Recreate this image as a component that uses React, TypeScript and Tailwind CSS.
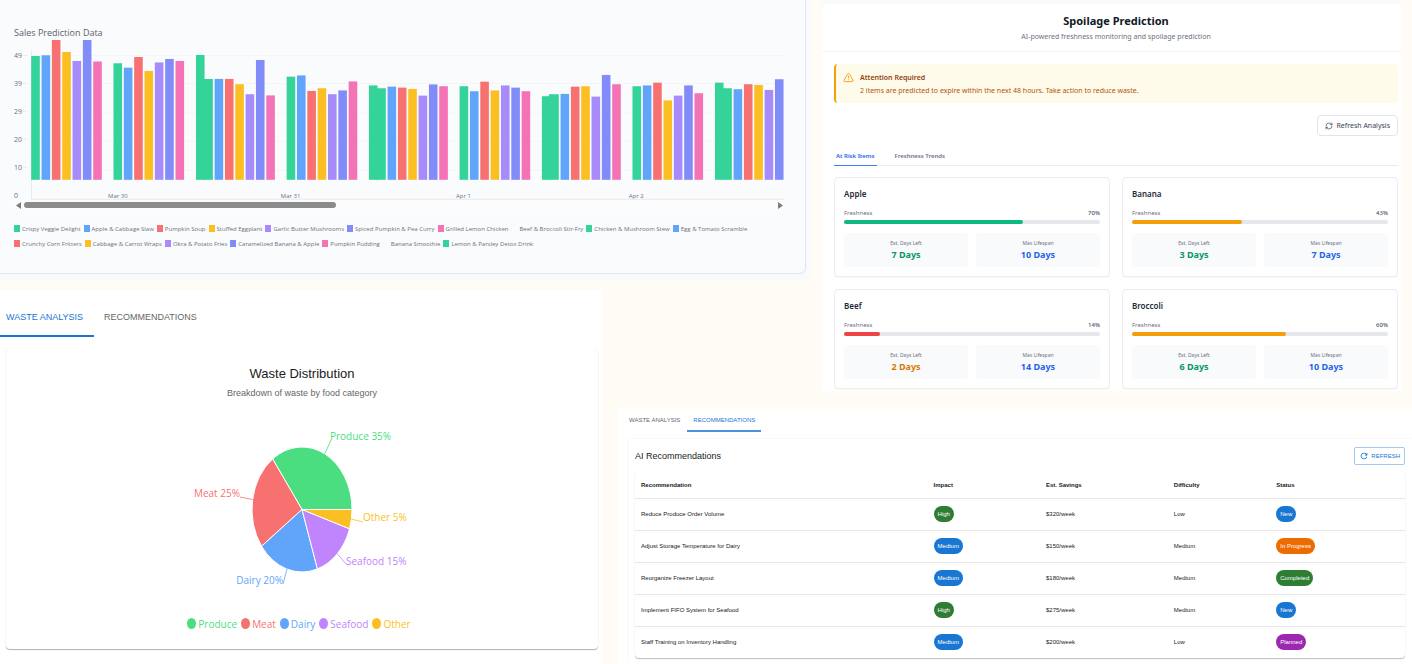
import { RefreshCw, TriangleAlert } from "lucide-react";
import { MdRefresh } from "react-icons/md";

const GREEN = "#34d399";
const BLUE = "#60a5fa";
const RED = "#f87171";
const AMBER = "#fbbf24";
const VIOLET = "#a78bfa";
const INDIGO = "#818cf8";
const PINK = "#f472b6";

const BAR_COLORS = [GREEN, BLUE, RED, AMBER, VIOLET, INDIGO, PINK];

const BASELINE = 180;
const BAR_WIDTH = 8.6;

/* Each group lists the top of its bars; `extra` is a second green bar that touches the first. */
const BAR_GROUPS: { x: number; extra?: number; tops: number[] }[] = [
  { x: 31.2, tops: [56, 55.3, 40, 52, 61, 40, 61.5] },
  { x: 113.6, tops: [63.3, 67.7, 57, 71, 62.5, 59, 61] },
  { x: 196.2, extra: 79, tops: [55, 79, 79, 84.3, 94.3, 60, 95.5] },
  { x: 287, tops: [76.7, 75.5, 91, 88.3, 94.3, 90.5, 81.5] },
  { x: 369.4, extra: 88.3, tops: [85.5, 86.7, 87.7, 89, 95.7, 84.5, 86.3] },
  { x: 460.2, tops: [86.3, 91.3, 81.7, 90.5, 85.5, 87.7, 91.3] },
  { x: 542.6, extra: 94.3, tops: [96.3, 94, 86.7, 86.3, 96.7, 75, 84.3] },
  { x: 633.3, tops: [86.3, 85.5, 82.7, 100.5, 95.7, 85.5, 93.3] },
  { x: 715.9, extra: 88.3, tops: [82.7, 89.3, 84.3, 85, 90, 79.3] },
];

const Y_LABELS = [
  { text: "49", y: 56 },
  { text: "39", y: 84 },
  { text: "29", y: 112 },
  { text: "20", y: 140 },
  { text: "10", y: 168 },
  { text: "0", y: 196 },
];

const X_LABELS = [
  { text: "Mar 30", x: 118 },
  { text: "Mar 31", x: 291 },
  { text: "Apr 1", x: 464 },
  { text: "Apr 2", x: 637 },
];

const DISHES: [string, string][] = [
  ["Crispy Veggie Delight", GREEN],
  ["Apple & Cabbage Slaw", BLUE],
  ["Pumpkin Soup", RED],
  ["Stuffed Eggplant", AMBER],
  ["Garlic Butter Mushrooms", VIOLET],
  ["Spiced Pumpkin & Pea Curry", INDIGO],
  ["Grilled Lemon Chicken", PINK],
  ["Beef & Broccoli Stir-Fry", "transparent"],
  ["Chicken & Mushroom Stew", GREEN],
  ["Egg & Tomato Scramble", BLUE],
  ["Crunchy Corn Fritters", RED],
  ["Cabbage & Carrot Wraps", AMBER],
  ["Okra & Potato Fries", VIOLET],
  ["Caramelized Banana & Apple", INDIGO],
  ["Pumpkin Pudding", PINK],
  ["Banana Smoothie", "transparent"],
  ["Lemon & Parsley Detox Drink", GREEN],
];

function SalesChart() {
  return (
    <svg viewBox="14 39 772 161" className="block w-full" role="img" aria-label="Sales prediction by dish and day">
      {[55.5, 83.5, 113.5, 141.5, 170.5].map((y) => (
        <line key={y} x1="31" x2="785" y1={y} y2={y} stroke="#f3f5f7" />
      ))}
      {[55.5, 83.5, 111.5, 139.5, 167.5].map((y) => (
        <line key={y} x1="23" x2="27" y1={y} y2={y} stroke="#e9ebee" />
      ))}
      <path d="M31.5 50V199.5H785" fill="none" stroke="#e8eaed" />
      {BAR_GROUPS.map((group) => (
        <g key={group.x}>
          {group.extra !== undefined && (
            <rect x={group.x + 7} y={group.extra} width={BAR_WIDTH + 1.3} height={BASELINE - group.extra} fill={GREEN} />
          )}
          {group.tops.map((top, i) => (
            <rect
              key={i}
              x={group.x + i * 10.35 + (group.extra !== undefined && i > 0 ? 8.3 : 0)}
              y={top}
              width={BAR_WIDTH}
              height={BASELINE - top}
              fill={BAR_COLORS[i]}
            />
          ))}
        </g>
      ))}
      <g fill="#6b7280" fontFamily="'Open Sans', sans-serif">
        {Y_LABELS.map((l) => (
          <text key={l.text} x="14" y={l.y + 2} fontSize="7">
            {l.text}
          </text>
        ))}
        {X_LABELS.map((l) => (
          <text key={l.text} x={l.x} y="198" fontSize="6" textAnchor="middle">
            {l.text}
          </text>
        ))}
      </g>
    </svg>
  );
}

function SalesPanel() {
  return (
    <section className="col-span-2 col-start-1 row-start-1 mr-[11px] mb-[9px] bg-[#f8fafc] pr-[5px] pb-[7px] font-['Open_Sans',sans-serif]">
      <div className="rounded-br-md border-r border-b border-[#e2e5ea] bg-[#fafbfd] pt-[26px] pr-5 pb-[25px] pl-[14px]">
        <h2 className="text-[9px] leading-[13px] font-medium text-[#5b616b]">Sales Prediction Data</h2>
        <SalesChart />
        <div className="mb-[14px] flex h-[11px] items-center gap-[3px] bg-[#fcfcfd] px-[2px]">
          <svg viewBox="0 0 5 7" className="h-[7px] w-[5px] shrink-0" aria-hidden="true">
            <path d="M5 0V7L0 3.5Z" fill="#7d7d7d" />
          </svg>
          <div className="flex-1">
            <div className="h-[6px] w-[41.5%] rounded-full bg-[#8b8b8b]" />
          </div>
          <svg viewBox="0 0 5 7" className="h-[7px] w-[5px] shrink-0" aria-hidden="true">
            <path d="M0 0V7L5 3.5Z" fill="#7d7d7d" />
          </svg>
        </div>
        <ul className="flex flex-wrap gap-x-[3px] gap-y-[7px]">
          {DISHES.map(([name, color]) => (
            <li key={name} className="flex items-center gap-[2px] text-[6px] leading-[8px] text-[#6b7280]">
              <span className="h-[7px] w-[6px]" style={{ backgroundColor: color }} />
              {name}
            </li>
          ))}
        </ul>
      </div>
    </section>
  );
}

type Item = {
  name: string;
  percent: number;
  fill: string;
  left: number;
  leftColor: string;
  life: number;
};

const ITEMS: Item[] = [
  { name: "Apple", percent: 70, fill: "bg-[#10b981]", left: 7, leftColor: "text-[#059669]", life: 10 },
  { name: "Banana", percent: 43, fill: "bg-[#f59e0b]", left: 3, leftColor: "text-[#059669]", life: 7 },
  { name: "Beef", percent: 14, fill: "bg-[#ef4444]", left: 2, leftColor: "text-[#d97706]", life: 14 },
  { name: "Broccoli", percent: 60, fill: "bg-[#f59e0b]", left: 6, leftColor: "text-[#059669]", life: 10 },
];

function Stat({ label, days, color }: { label: string; days: number; color: string }) {
  return (
    <div className="rounded bg-[#f9fafb] pt-[6px] pb-[5px] text-center">
      <p className="text-[5px] leading-[8px] text-[#6b7280]">{label}</p>
      <p className={`text-[9px] leading-[15px] font-bold ${color}`}>{days} Days</p>
    </div>
  );
}

function ItemCard({ item }: { item: Item }) {
  return (
    <article className="rounded border border-[#eceef1] bg-white px-[9px] pt-[10px] pb-[9px] shadow-[0_1px_1px_rgba(0,0,0,0.03)]">
      <h3 className="text-[8px] leading-[12px] font-semibold text-[#1f2937]">{item.name}</h3>
      <div className="mt-2 flex justify-between text-[6px] leading-[10px] text-[#6b7280]">
        <span>Freshness</span>
        <span className="font-medium text-[#4b5563]">{item.percent}%</span>
      </div>
      <div
        role="progressbar"
        aria-label={`${item.name} freshness`}
        aria-valuenow={item.percent}
        className="mt-[2px] h-1 rounded-full bg-[#e5e7eb]"
      >
        <div className={`h-full rounded-full ${item.fill}`} style={{ width: `${item.percent}%` }} />
      </div>
      <div className="mt-[9px] grid grid-cols-2 gap-2">
        <Stat label="Est. Days Left" days={item.left} color={item.leftColor} />
        <Stat label="Max Lifespan" days={item.life} color="text-[#2563eb]" />
      </div>
    </article>
  );
}

function SpoilagePanel() {
  return (
    <section className="col-start-3 row-span-2 row-start-1 mr-[11px] mb-[18px] bg-[#f8fafc] pt-1 font-['Noto_Sans',sans-serif]">
      <div className="rounded-tl-md bg-white pb-[2px]">
        <header className="border-b border-[#f3f4f6] pt-2 pb-2 pl-[9px] text-center">
          <h2 className="text-[11px] leading-[17px] font-bold text-[#111827]">Spoilage Prediction</h2>
          <p className="mt-[2px] text-[7px] leading-[12px] text-[#6b7280]">
            AI-powered freshness monitoring and spoilage prediction
          </p>
        </header>
        <div className="pt-3 pr-[3px] pl-3">
          <div
            role="alert"
            className="flex gap-[6px] rounded border-l-2 border-[#f59e0b] bg-[#fffbeb] pt-[7px] pr-2 pb-[6px] pl-[7px]"
          >
            <TriangleAlert className="mt-[1px] size-[11px] shrink-0 text-[#f59e0b]" />
            <div className="text-[7px] leading-[13px]">
              <p className="font-semibold text-[#92400e]">Attention Required</p>
              <p className="text-[#b45309]">
                2 items are predicted to expire within the next 48 hours. Take action to reduce waste.
              </p>
            </div>
          </div>
          <div className="mt-3 flex justify-end">
            <button
              type="button"
              className="flex h-[21px] items-center gap-[3px] rounded border border-[#e1e4e8] bg-white px-[7px] text-[7px] leading-[10px] text-[#374151]"
            >
              <RefreshCw className="size-[8px]" />
              Refresh Analysis
            </button>
          </div>
          <div
            role="tablist"
            className="mt-[14px] flex gap-4 border-b border-[#e9ebee] text-[6px] leading-[12px] font-semibold"
          >
            <button
              type="button"
              role="tab"
              aria-selected="true"
              className="-mb-px border-b border-[#3b82f6] px-[2px] pb-[3px] text-[#2563eb]"
            >
              At Risk Items
            </button>
            <button type="button" role="tab" aria-selected="false" className="px-[2px] pb-[3px] text-[#6b7280]">
              Freshness Trends
            </button>
          </div>
          <div className="mt-[11px] grid grid-cols-2 gap-3">
            {ITEMS.map((item) => (
              <ItemCard key={item.name} item={item} />
            ))}
          </div>
        </div>
      </div>
    </section>
  );
}

const SLICES = [
  { name: "Produce", value: 35, color: "#4ade80" },
  { name: "Meat", value: 25, color: "#f87171" },
  { name: "Dairy", value: 20, color: "#60a5fa" },
  { name: "Seafood", value: 15, color: "#c084fc" },
  { name: "Other", value: 5, color: "#fbbf24" },
];

const SLICE_LABELS = [
  { x: 330, y: 440, anchor: "start", line: "M324.7 454L331 440" },
  { x: 240, y: 497, anchor: "end", line: "M252.5 499.5L240 497" },
  { x: 283, y: 584, anchor: "end", line: "M287 569L283 584" },
  { x: 346, y: 565, anchor: "start", line: "M337.5 554L346 564H347" },
  { x: 363, y: 521, anchor: "start", line: "M351 519L363 522" },
] as const;

function point(percent: number) {
  const a = (percent / 100) * Math.PI * 2;
  return `${(302 + 50 * Math.cos(a)).toFixed(2)} ${(509.5 - 62.5 * Math.sin(a)).toFixed(2)}`;
}

function WastePie() {
  let start = 0;
  return (
    <svg
      viewBox="182 425 240 170"
      className="mx-auto mt-6 block h-[170px] max-w-full"
      role="img"
      aria-label="Waste by food category"
    >
      {SLICES.map((s, i) => {
        const from = start;
        start += s.value;
        const label = SLICE_LABELS[i];
        return (
          <g key={s.name}>
            <path
              d={`M302 509.5L${point(from)}A50 62.5 0 0 0 ${point(start)}Z`}
              fill={s.color}
              stroke="#ffffff"
              strokeWidth="1"
            />
            <path d={label.line} fill="none" stroke={s.color} strokeWidth="0.8" />
            <text
              x={label.x}
              y={label.y}
              textAnchor={label.anchor}
              fill={s.color}
              fontSize="10"
              fontFamily="'Open Sans', sans-serif"
            >
              {s.name} {s.value}%
            </text>
          </g>
        );
      })}
    </svg>
  );
}

function WastePanel() {
  return (
    <section className="col-start-1 row-span-2 row-start-2 mr-[15px] bg-white pb-3 font-['Liberation_Sans',sans-serif]">
      <div role="tablist" className="flex gap-1 text-[9px] leading-[14px]">
        <button
          type="button"
          role="tab"
          aria-selected="true"
          className="border-b-2 border-[#1976d2] pt-5 pr-[11px] pb-[11px] pl-[6px] text-[#1976d2]"
        >
          WASTE ANALYSIS
        </button>
        <button
          type="button"
          role="tab"
          aria-selected="false"
          className="border-b-2 border-transparent px-[6px] pt-5 pb-[11px] text-[#666666]"
        >
          RECOMMENDATIONS
        </button>
      </div>
      <div className="mt-3 mr-[5px] ml-[6px] rounded-sm bg-white pt-4 pb-[17px] text-center shadow-[0_1px_1px_rgba(0,0,0,0.3),0_0_1px_rgba(0,0,0,0.1)]">
        <h2 className="text-[13px] leading-[18px] text-[#212121]">Waste Distribution</h2>
        <p className="mt-[3px] text-[9px] leading-[15px] text-[#666666]">Breakdown of waste by food category</p>
        <WastePie />
        <ul className="mt-[21px] mr-[6px] flex justify-center gap-1 font-['Open_Sans',sans-serif] text-[10px] leading-[16px]">
          {SLICES.map((s) => (
            <li key={s.name} className="flex items-center gap-[2px]" style={{ color: s.color }}>
              <svg viewBox="0 0 9 11" className="h-[11px] w-[9px]" aria-hidden="true">
                <ellipse cx="4.5" cy="5.5" rx="4.5" ry="5.5" fill="currentColor" />
              </svg>
              {s.name}
            </li>
          ))}
        </ul>
      </div>
    </section>
  );
}

const CHIP: Record<string, string> = {
  High: "bg-[#2e7d32]",
  Medium: "bg-[#1976d2]",
  New: "bg-[#1976d2]",
  "In Progress": "bg-[#ed6c02]",
  Completed: "bg-[#2e7d32]",
  Planned: "bg-[#9c27b0]",
};

function Chip({ label }: { label: string }) {
  return (
    <span
      className={`inline-flex h-4 items-center rounded-full px-1 align-middle text-[6px] leading-[8px] text-white ${CHIP[label]}`}
    >
      {label}
    </span>
  );
}

const ROWS = [
  ["Reduce Produce Order Volume", "High", "$320/week", "Low", "New"],
  ["Adjust Storage Temperature for Dairy", "Medium", "$150/week", "Medium", "In Progress"],
  ["Reorganize Freezer Layout", "Medium", "$180/week", "Medium", "Completed"],
  ["Implement FIFO System for Seafood", "High", "$275/week", "Medium", "New"],
  ["Staff Training on Inventory Handling", "Medium", "$200/week", "Low", "Planned"],
];

function RecommendationsPanel() {
  return (
    <section className="col-span-2 col-start-2 row-start-3 bg-white pl-[11px] font-['Liberation_Sans',sans-serif]">
      <div role="tablist" className="flex gap-[2px] text-[6px] leading-[10px]">
        <button
          type="button"
          role="tab"
          aria-selected="false"
          className="border-b-2 border-transparent pt-[6px] pr-[5px] pb-[5px] text-[#666666]"
        >
          WASTE ANALYSIS
        </button>
        <button
          type="button"
          role="tab"
          aria-selected="true"
          className="border-b-2 border-[#4a90dc] px-[6px] pt-[6px] pb-[5px] text-[#1976d2]"
        >
          RECOMMENDATIONS
        </button>
      </div>
      <div className="mt-[7px] bg-white pt-2 pr-[7px] pb-[6px] pl-[6px] shadow-[0_0_2px_rgba(0,0,0,0.08)]">
        <div className="flex items-center justify-between">
          <h2 className="text-[9px] leading-[14px] text-[#212121]">AI Recommendations</h2>
          <button
            type="button"
            className="flex h-[18px] items-center gap-[2px] rounded-xs border border-[#a3c8ed] px-1 text-[6px] leading-[8px] text-[#1976d2]"
          >
            <MdRefresh className="size-[10px]" />
            REFRESH
          </button>
        </div>
        <table className="mt-[6px] w-full table-fixed border-collapse rounded-sm text-left text-[6px] leading-[8px] text-[#212121] shadow-[0_1px_1px_rgba(0,0,0,0.25),0_0_1px_rgba(0,0,0,0.1)]">
          <colgroup>
            <col className="w-[38%]" />
            <col className="w-[14.6%]" />
            <col className="w-[16.6%]" />
            <col className="w-[13.3%]" />
            <col className="w-[17.5%]" />
          </colgroup>
          <thead>
            <tr className="h-[27px] border-b border-[#e8e8e8]">
              {["Recommendation", "Impact", "Est. Savings", "Difficulty", "Status"].map((h) => (
                <th key={h} scope="col" className="px-[6px] pt-[2px] font-bold">
                  {h}
                </th>
              ))}
            </tr>
          </thead>
          <tbody>
            {ROWS.map(([name, impact, savings, difficulty, status]) => (
              <tr key={name} className="h-8 border-b border-[#e8e8e8] last:border-b-0">
                <td className="px-[6px]">{name}</td>
                <td className="px-[6px]">
                  <Chip label={impact} />
                </td>
                <td className="px-[6px]">{savings}</td>
                <td className="px-[6px]">{difficulty}</td>
                <td className="px-[6px]">
                  <Chip label={status} />
                </td>
              </tr>
            ))}
          </tbody>
        </table>
      </div>
    </section>
  );
}

export default function App() {
  return (
    <main className="grid min-h-screen grid-cols-[618fr_204fr_590fr] grid-rows-[auto_1fr_auto] bg-[#fffcf5]">
      <SalesPanel />
      <SpoilagePanel />
      <WastePanel />
      <RecommendationsPanel />
    </main>
  );
}
